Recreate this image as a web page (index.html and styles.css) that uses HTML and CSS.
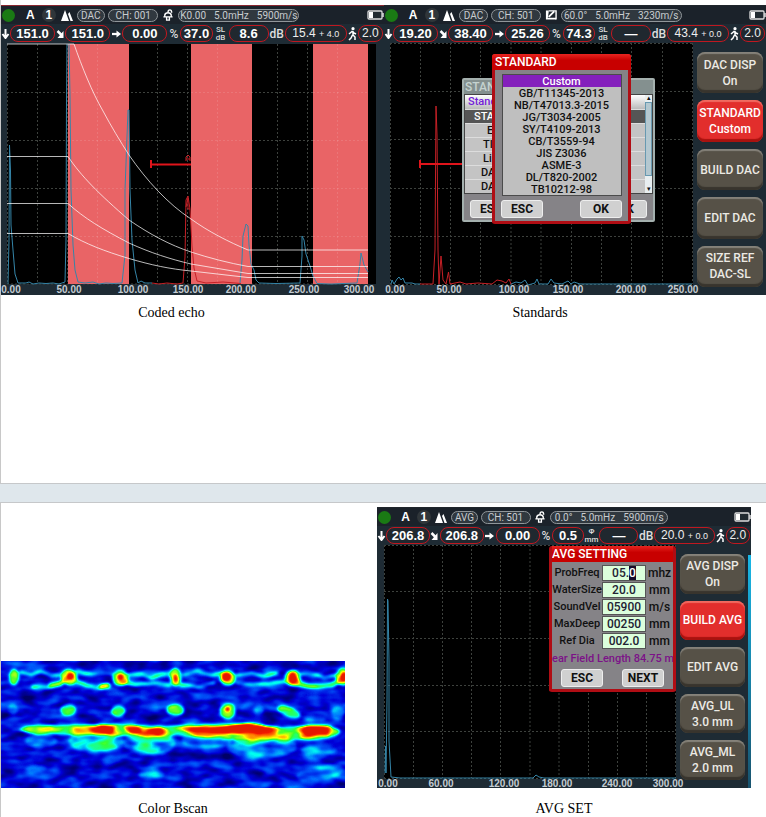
FILE: index.html
```html
<!DOCTYPE html>
<html lang="en">
<head>
<meta charset="utf-8">
<title>Flaw detector functions</title>
<link rel="stylesheet" href="styles.css">
</head>
<body>
<svg class="defs" aria-hidden="true">
  <symbol id="peaks" viewBox="0 0 12 12"><path d="M0 12 4 1 8 12ZM7 5 8.500 3 12 12H9.500Z" fill="#fff"/></symbol>
  <symbol id="probe" viewBox="0 0 12 13"><path d="M1 8.500H11M2.500 8V6.500Q3 4 6 4T9.500 6.500V8M4.500 9V12H7.500V9M6 3.500Q6 1 8 1T10 4" fill="none" stroke="#fff" stroke-width="1.500"/></symbol>
  <symbol id="angle" viewBox="0 0 13 12"><path d="M1 1H4V3L3 9H12V11H1Z" fill="#fff"/><path d="M4 1.500H12V11" fill="none" stroke="#fff" stroke-width="1.500"/><path d="M4 8 10 2" stroke="#fff" stroke-width="2"/></symbol>
  <symbol id="battery" viewBox="0 0 17 10"><rect x="1" y="1" width="14" height="8" rx="1" fill="#222b31" stroke="#ddd" stroke-width="1.300"/><path d="M2 2H6V8H2Z" fill="#fff"/><path d="M16 3V7" stroke="#ddd" stroke-width="1.500"/></symbol>
  <symbol id="down" viewBox="0 0 8 10"><path d="M4 0V8M1 5 4 9 7 5" fill="none" stroke="#fff" stroke-width="2"/></symbol>
  <symbol id="diag" viewBox="0 0 8 10"><path d="M1 2 5 6" stroke="#fff" stroke-width="2.500"/><path d="M7 2V9H1Z" fill="#fff"/></symbol>
  <symbol id="right" viewBox="0 0 10 10"><path d="M0 5H6" stroke="#fff" stroke-width="2.500"/><path d="M5 1 10 5 5 9Z" fill="#fff"/></symbol>
  <symbol id="walk" viewBox="0 0 9 14"><circle cx="5" cy="1.700" r="1.600" fill="#fff"/><path d="M5 4V8L7 10V13M4.500 8 3 11 1 13M1 7 4 4.500 6 6 8 7" fill="none" stroke="#fff" stroke-width="1.500"/></symbol>
</svg>

<main>
<section class="page page-first">
  <figure class="shot coded">
    <div class="device">
      <div class="status">
        <i class="lamp"></i><b>A</b><b class="num">1</b><svg><use href="#peaks"/></svg>
        <span class="tag">DAC</span><span class="tag ch">CH: 001</span><svg><use href="#probe"/></svg>
        <span class="tag wide"><span>K0.00</span><span>5.0mHz</span><span>5900m/s</span></span><svg class="bat"><use href="#battery"/></svg>
      </div>
      <div class="readout">
        <svg><use href="#down"/></svg><b class="val">151.0</b><svg><use href="#diag"/></svg><b class="val">151.0</b>
        <svg><use href="#right"/></svg><b class="val">0.00</b><span class="unit">%</span><b class="val">37.0</b>
        <span class="stack"><span>SL</span><span>dB</span></span><b class="val">8.6</b><span class="unit">dB</span>
        <span class="val gain">15.4 <small>+ 4.0</small></span><svg class="man"><use href="#walk"/></svg><span class="val gain">2.0</span>
      </div>
      <svg class="chart" viewBox="0 43 383 252" role="img" aria-label="Coded echo A-scan">
        <path class="plot" d="M6 44H375V284H6Z"/>
        <path class="grid" d="M6.500 44V284M36.500 44V284M66.500 44V284M96.500 44V284M126.500 44V284M156.500 44V284M186.500 44V284M216.500 44V284M246.500 44V284M276.500 44V284M306.500 44V284M336.500 44V284M6 92.500H367M6 140.500H367M6 188.500H367M6 236.500H367M6 284H367"/>
        <path fill="#e96466" d="M67 44H128V284H67ZM190 44H251V284H190ZM312 44H367V284H312Z"/>
        <path class="grid faint" d="M96.500 44V284M216.500 44V284M336.500 44V284M67 92.500H128M67 140.500H128M67 188.500H128M67 236.500H128M190 92.500H251M190 140.500H251M190 188.500H251M190 236.500H251M312 92.500H367M312 140.500H367M312 188.500H367M312 236.500H367"/>
        <path class="echo" d="M7 284 8 240 8.500 145 9.500 171 10 225 12 250 14 274 17 283 25 283 28 282 32 284 38 283 45 283.500 52 283 58 284 64 282 65 240 65.500 100 66 44M68 44 69 95 70 190 72 245 74 270 77 282 84 283 92 282 98 284 105 283 112 283.500 121 283 124 255 124 190 127 110 128 110 129 190 131 240 134 270 137 283 140 281 144 283 151 283M239 283 241 260 242 236 245 224 247 226 248 245 250 264 253 270 255 280 258 283 275 283.500 299 283 301 256 301 236 303 240 305 254 309 266 312 276 316 283.500 330 284 356 283 359 264 360 253 363 265 367 272"/>
        <path class="hit" d="M151 283 158 284 166 283 176 284 182 283 184 257 185 200 187 196 189 209 187 209 187 198 185 207M189 209 191 246 193 268 196 281 205 283 222 282 240 283.500"/>
        <path class="gate" d="M150 160V168M150 164.500H190"/><path class="hit" d="M185 161V157L187 155 189 157V161M185 159H189"/>
        <path class="curve" d="M6 44H73C81 67 91 92 102 111 110 126 119 141 128 155 146 181 167 204 190 219 208 232 228 242 247 250H367M6 156.500H67C80 176 98 194 128 220 150 235 169 245 190 252 208 258 228 263 247 266.500H367M6 203.500H67C83 218 101 229 128 243 150 253 169 259 190 264L247 273.500H367M6 233.500H67C85 244 103 251 128 258.500 150 265 169 269 190 271L247 277.500H367"/>
        <g class="axis"><text x="10" y="293">0.00</text><text x="68" y="293">50.00</text><text x="132" y="293">100.00</text><text x="187" y="293">150.00</text><text x="240" y="293">200.00</text><text x="303" y="293">250.00</text><text x="358" y="293">300.00</text></g>
      </svg>
    </div>
    <figcaption>Coded echo</figcaption>
  </figure>

  <figure class="shot standards">
    <div class="device">
      <div class="status">
        <i class="lamp"></i><b>A</b><b class="num">1</b><svg><use href="#peaks"/></svg>
        <span class="tag">DAC</span><span class="tag ch">CH: 501</span><svg><use href="#angle"/></svg>
        <span class="tag wide"><span>60.0°</span><span>5.0mHz</span><span>3230m/s</span></span><svg class="bat"><use href="#battery"/></svg>
      </div>
      <div class="readout">
        <svg><use href="#down"/></svg><b class="val">19.20</b><svg><use href="#diag"/></svg><b class="val">38.40</b>
        <svg><use href="#right"/></svg><b class="val">25.26</b><span class="unit">%</span><b class="val">74.3</b>
        <span class="stack"><span>SL</span><span>dB</span></span><b class="val">—</b><span class="unit">dB</span>
        <span class="val gain">43.4 <small>+ 0.0</small></span><svg class="man"><use href="#walk"/></svg><span class="val gain">2.0</span>
      </div>
      <div class="work">
        <div class="scope">
          <svg class="chart" viewBox="384 43 311 252" role="img" aria-label="A-scan">
            <path class="plot" d="M390 43H693V285H390Z"/>
            <path class="grid" d="M390.500 43V284M420.500 43V284M450.500 43V284M480.500 43V284M511 43V284M541 43V284M571.500 43V284M601.500 43V284M631.500 43V284M662.500 43V284M692.500 43V284M390 43.500H692M390 91.500H692M390 139.500H692M390 188.500H692M390 236.500H692M390 284.500H692"/>
            <path class="echo" d="M391 284 392 280 394 284 397 279 399 277 401 280 403 278 405 283 412 283 415 284 420 284M511 284 516 282 521 283 525 280 528 285 535 283 537 279 539 284 548 284 551 279 554 283 562 284 568 281 571 284 574 282 580 284 692 284"/>
            <path class="hit" d="M420 284 433 284 435 250 436 106 437 135 438 250 439 284 441 256 443 280 446 284 448.500 272 450 284 460 282 466 284 478 283 492 284 497 280 502 281 506 283 509 279 511 284"/>
            <path class="gate" d="M420 160V168M420 164H463"/>
            <g class="axis"><text x="395" y="293">0.00</text><text x="449" y="293">50.00</text><text x="514" y="293">100.00</text><text x="568" y="293">150.00</text><text x="631" y="293">200.00</text><text x="683" y="293">250.00</text></g>
          </svg>
          <div class="dialog under">
            <h2>STAN</h2>
            <div class="table-wrap">
              <table>
                <thead><tr><th>Stand</th></tr></thead>
                <tbody><tr class="picked"><td>STA</td></tr><tr><td class="in2">E</td></tr><tr><td class="in1">TI</td></tr><tr><td class="in1">Li</td></tr><tr><td>DA</td></tr><tr><td>DA</td></tr></tbody>
              </table>
              <div class="scroll"><i>▴</i><span></span><i>▾</i></div>
            </div>
            <div class="actions"><button type="button">ESC</button><button type="button">OK</button></div>
          </div>
          <div class="dialog red over">
            <h2 id="std">STANDARD</h2>
            <select size="10" aria-labelledby="std">
              <option selected>Custom</option><option>GB/T11345-2013</option><option>NB/T47013.3-2015</option><option>JG/T3034-2005</option><option>SY/T4109-2013</option><option>CB/T3559-94</option><option>JIS Z3036</option><option>ASME-3</option><option>DL/T820-2002</option><option>TB10212-98</option>
            </select>
            <div class="actions"><button type="button">ESC</button><button type="button">OK</button></div>
          </div>
        </div>
        <nav class="menu">
          <button type="button">DAC DISP<br>On</button><button type="button" class="on">STANDARD<br>Custom</button><button type="button">BUILD DAC</button><button type="button">EDIT DAC</button><button type="button">SIZE REF<br>DAC-SL</button>
        </nav>
      </div>
    </div>
    <figcaption>Standards</figcaption>
  </figure>
</section>

<section class="page page-second">
  <figure class="shot bscan">
    <svg class="map" viewBox="0 0 343 127" preserveAspectRatio="none" role="img" aria-label="Color B-scan">
      <defs>
        <filter id="jet" x="0" y="0" width="343" height="127" filterUnits="userSpaceOnUse" color-interpolation-filters="sRGB">
          <feGaussianBlur in="SourceGraphic" stdDeviation="1.800" result="s"/>
          <feTurbulence type="fractalNoise" baseFrequency="0.050 0.100" numOctaves="2" seed="8"/>
          <feColorMatrix values="1 0 0 0 0 1 0 0 0 0 1 0 0 0 0 0 0 0 0 1" result="n"/>
          <feComposite in="s" in2="n" operator="arithmetic" k1="0" k2="0.930" k3="0.420" k4="-0.100"/>
          <feColorMatrix values="1 0 0 0 0 0 1 0 0 0 0 0 1 0 0 0 0 0 0 1"/>
          <feComponentTransfer>
            <feFuncR type="table" tableValues="0 0 0 0 .2 1 1 .95 .9"/>
            <feFuncG type="table" tableValues="0 0 .4 1 1 1 .45 .1 .1"/>
            <feFuncB type="table" tableValues=".4 .85 1 .95 .2 0 0 0 0"/>
          </feComponentTransfer>
        </filter>
      </defs>
      <g filter="url(#jet)">
        <path d="M-10-10H353V137H-10Z" fill="#060606"/>
        <g fill="none" stroke="#fff" stroke-linecap="round" stroke-opacity=".28" stroke-width="4">
          <path d="M20 11 30 14 40 10 50 15 62 13M76 10 90 14 100 12 112 13M128 14 140 13 150 17 160 13 170 12M182 14 196 10 210 14 220 12M236 14 250 12 262 16 275 12M300 13 315 14 322 17 334 14"/>
          <path d="M32 26 46 27 58 23 66 18M76 20 86 25 98 27 106 23M120 20 134 24 152 22 168 24M180 24 196 26 212 22M236 22 250 24 268 23 284 20"/>
        </g>
        <g fill="none" stroke="#fff" stroke-linecap="round" stroke-opacity=".42" stroke-width="5"><path d="M50 24 60 22M100 26 107 25M296 22 306 25 318 26 330 24 338 20"/></g>
        <g fill="#fff" fill-opacity=".48">
          <ellipse cx="13" cy="16" rx="5" ry="8"/><ellipse cx="68" cy="16" rx="8" ry="8"/><ellipse cx="119" cy="17" rx="8" ry="8"/><ellipse cx="174" cy="16" rx="6" ry="9"/><ellipse cx="226" cy="17" rx="8" ry="8"/><ellipse cx="291" cy="17" rx="8" ry="8"/><ellipse cx="341" cy="16" rx="7" ry="9"/>
        </g>
        <g fill="#fff" fill-opacity=".4">
          <ellipse cx="67" cy="49" rx="8" ry="6"/><ellipse cx="117" cy="50" rx="7" ry="6"/><ellipse cx="174" cy="49" rx="9" ry="6"/><ellipse cx="226" cy="50" rx="8" ry="8"/><ellipse cx="287" cy="51" rx="12" ry="5" transform="rotate(20 287 51)"/>
        </g>
        <g fill="#fff" fill-opacity=".16">
          <ellipse cx="12" cy="48" rx="5" ry="6"/><ellipse cx="257" cy="49" rx="5" ry="6"/><ellipse cx="336" cy="52" rx="7" ry="7"/><ellipse cx="313" cy="58" rx="11" ry="3"/>
          <ellipse cx="40" cy="80" rx="16" ry="7"/><ellipse cx="95" cy="80" rx="28" ry="12"/><ellipse cx="148" cy="82" rx="26" ry="12"/><ellipse cx="205" cy="79" rx="25" ry="9"/><ellipse cx="260" cy="85" rx="35" ry="13"/><ellipse cx="317" cy="89" rx="18" ry="5"/><ellipse cx="318" cy="112" rx="24" ry="8" transform="rotate(-10 318 112)"/><ellipse cx="150" cy="114" rx="13" ry="4"/><ellipse cx="35" cy="108" rx="11" ry="3"/>
          <ellipse cx="100" cy="86" rx="16" ry="5"/><ellipse cx="145" cy="87" rx="14" ry="5"/><ellipse cx="95" cy="77" rx="20" ry="5"/><ellipse cx="148" cy="78" rx="20" ry="5"/><ellipse cx="260" cy="79" rx="28" ry="5"/>
        </g>
        <path d="M17 69Q28 62 60 64L105 63 170 65 240 62 280 66 315 64Q338 66 338 71 334 79 310 79L250 79 205 76 175 75 130 75 90 74 35 74Z" fill="#fff" fill-opacity=".42"/>
        <path d="M34 68Q44 64 54 68L46 71ZM70 68Q96 61 115 66L111 73 82 72ZM122 66Q135 61 145 67L161 66 168 69 160 75 140 73 124 71ZM179 68 205 64 225 66 250 61 278 67 274 74 220 73 205 77 190 73ZM295 70Q300 62 329 65L331 71 326 76 300 77Z" fill="#fff" fill-opacity=".4"/>
        <path d="M87 68 100 65 112 67 109 72 93 72ZM123 66 136 66 141 70 130 72ZM144 69 158 67 163 70 156 73ZM183 68 220 66 247 63 262 66 275 69 255 72 205 72ZM299 70 305 67 327 68 326 73 305 75Z" fill="#fff"/>
        <g fill="#fff"><circle cx="69" cy="15" r="3"/><circle cx="119" cy="16" r="3"/><ellipse cx="174" cy="17" rx="2" ry="4"/><ellipse cx="225" cy="16" rx="4" ry="4"/><ellipse cx="291" cy="17" rx="4" ry="5"/><ellipse cx="342" cy="16" rx="3" ry="5"/><circle cx="226" cy="48" r="2"/></g>
      </g>
    </svg>
    <figcaption>Color Bscan</figcaption>
  </figure>

  <figure class="shot avg">
    <div class="device">
      <div class="status">
        <i class="lamp"></i><b>A</b><b class="num">1</b><svg><use href="#peaks"/></svg>
        <span class="tag">AVG</span><span class="tag ch">CH: 501</span><svg><use href="#probe"/></svg>
        <span class="tag wide"><span>0.0°</span><span>5.0mHz</span><span>5900m/s</span></span><svg class="bat"><use href="#battery"/></svg>
      </div>
      <div class="readout">
        <svg><use href="#down"/></svg><b class="val">206.8</b><svg><use href="#diag"/></svg><b class="val">206.8</b>
        <svg><use href="#right"/></svg><b class="val">0.00</b><span class="unit">%</span><b class="val">0.5</b>
        <span class="stack"><span>Φ</span><span>mm</span></span><b class="val">—</b><span class="unit">dB</span>
        <span class="val gain">20.0 <small>+ 0.0</small></span><svg class="man"><use href="#walk"/></svg><span class="val gain">2.0</span>
      </div>
      <div class="work">
        <div class="scope">
          <svg class="chart" viewBox="377 544 302 243" role="img" aria-label="A-scan">
            <path class="plot" d="M384 544H676V778H384Z"/>
            <path class="grid" d="M384.500 544V777M413.500 544V777M442.500 544V777M471.500 544V777M500.500 544V777M530 544V777M559 544V777M588.500 544V777M617.500 544V777M646.500 544V777M675.500 544V777M384 544.500H676M384 590.500H676M384 637.500H676M384 684.500H676M384 730.500H676M384 777.500H676"/>
            <path class="echo" d="M385 772 385.500 745 386 772 387 700 387.500 598 388 600 389 660 389 740 391 776 400 777 470 777 533 777 536 774 539 776 544 777 676 777"/>
            <g class="axis"><text x="388" y="786">0.00</text><text x="441" y="786">60.00</text><text x="504" y="786">120.00</text><text x="557" y="786">180.00</text><text x="617" y="786">240.00</text><text x="668" y="786">300.00</text></g>
          </svg>
          <form class="dialog red setting">
            <h2>AVG SETTING</h2>
            <div class="fields">
              <label for="freq">ProbFreq</label><input id="freq" value="05.0"><span>mhz</span>
              <label for="size">WaterSize</label><input id="size" value="20.0"><span>mm</span>
              <label for="vel">SoundVel</label><input id="vel" value="05900"><span>m/s</span>
              <label for="deep">MaxDeep</label><input id="deep" value="00250"><span>mm</span>
              <label for="dia">Ref Dia</label><input id="dia" value="002.0"><span>mm</span>
            </div>
            <p class="near"><span>ear Field Length 84.75 m</span></p>
            <div class="actions"><button type="button">ESC</button><button type="button">NEXT</button></div>
          </form>
        </div>
        <nav class="menu">
          <button type="button">AVG DISP<br>On</button><button type="button" class="on">BUILD AVG</button><button type="button">EDIT AVG</button><button type="button">AVG_UL<br>3.0 mm</button><button type="button">AVG_ML<br>2.0 mm</button>
        </nav>
      </div>
    </div>
    <figcaption>AVG SET</figcaption>
  </figure>
</section>
</main>
<script src="script.js"></script>
</body>
</html>
```
FILE: styles.css
```css
* { box-sizing: border-box; }
body { margin: 0; background: #dfe7ec; font-family: "Liberation Serif", serif; color: #000; overflow-x: hidden; }
.defs { position: absolute; width: 0; height: 0; }
.page { display: grid; background: #fff; border-left: 1px solid #c8c8c8; }
.page-first { grid-template-columns: minmax(0, 383fr) minmax(0, 382fr); padding: 5px 0 160px; border-bottom: 1px solid #c6c8ca; margin-bottom: 18px; }
.page-second { grid-template-columns: minmax(0, 344fr) minmax(0, 374fr); column-gap: 32px; padding: 4px 15px 0 0; border-top: 1px solid #c6c8ca; align-items: end; }
.shot { margin: 0; }
figcaption { font-size: 14px; line-height: 20px; text-align: center; margin-top: 8px; }
.page-second figcaption { margin-top: 11px; }
.coded figcaption { padding-right: 42px; }
.standards figcaption { padding-right: 70px; }
.map { display: block; width: 100%; height: 127px; margin-bottom: 1px; }

.device { font-family: Roboto, "Liberation Sans", sans-serif; background: #1e2b34; color: #fff; border-top: 1px solid #20262c; }
.coded .device { border-top-color: #8a2730; }
.status, .readout { display: grid; align-items: center; justify-items: center; }
.status { height: 18px; grid-template-columns: 18fr 22fr 15fr 20fr 28fr 53fr 20fr 120fr 84fr; background: #1b222a; font-size: 12px; }
.status > * { min-width: 0; }
.status > b { font-family: "Liberation Sans", sans-serif; }
.status > svg { width: 12px; height: 12px; }
.status > svg.bat { width: 17px; height: 10px; justify-self: end; }
.lamp { width: 13px; height: 13px; border-radius: 50%; background: #1a7a14; justify-self: start; margin-left: 1px; }
.num { background: #30363a; border-radius: 50%; width: 14px; text-align: center; line-height: 14px; }
.tag { display: flex; justify-content: center; align-items: center; width: 100%; height: 13px; border: 1px solid #90969a; border-radius: 7px; background: #30383f; color: #c8cccf; font: 10px/11px Roboto, "Liberation Sans", sans-serif; white-space: nowrap; }
.tag.ch { width: 50px; justify-self: end; }
.tag.wide { gap: 8px; }
.readout { height: 19px; grid-template-columns: 9fr 45fr 10fr 45fr 12fr 45fr 13fr 32fr 16fr 40fr 16fr 62fr 11fr 25fr 1fr; font-family: "Liberation Sans", sans-serif; font-size: 13px; }
.readout > * { min-width: 0; }
.readout > svg { width: 9px; height: 10px; }
.readout > svg.man { height: 14px; }
.val { width: 100%; height: 17px; border: 1px solid #c01820; border-radius: 8px; background: #20282f; line-height: 15px; text-align: center; white-space: nowrap; }
.val.gain { font-size: 12px; color: #eee; }
.gain small { font-size: 9px; }
.unit { font: 500 12px/14px Roboto, "Liberation Sans", sans-serif; color: #ddd; }
.stack { display: grid; font: 500 8px/8px Roboto, "Liberation Sans", sans-serif; text-align: center; color: #ddd; }

.chart { display: block; width: 100%; height: auto; overflow: visible; }
.plot { fill: #000; }
.grid { fill: none; stroke: #3d413d; stroke-dasharray: 2 2; }
.grid.faint { stroke: #fff; stroke-opacity: .12; }
.echo { fill: none; stroke: #3585a8; }
.hit { fill: none; stroke: #c62026; }
.gate { fill: none; stroke: #e0141b; stroke-width: 2; }
.curve { fill: none; stroke: #fff; stroke-opacity: .72; }
.axis { font: bold 10px "Liberation Sans", sans-serif; fill: #c4ccd2; text-anchor: middle; }

.work { display: grid; grid-template-columns: minmax(0, 311fr) minmax(0, 71fr); }
.avg .work { grid-template-columns: minmax(0, 302fr) minmax(0, 72fr); }
.scope { position: relative; }
button { font-family: inherit; font-weight: 500; padding: 0; }
.menu { display: flex; flex-direction: column; gap: 7px; padding: 9px 3px 8px 2px; }
.avg .menu { padding: 9px 6px 8px 1px; background: linear-gradient(#18b8e8, #184e68) right 10px / 3px 100% no-repeat; }
.menu button { flex: 1; border: 0; border-radius: 8px; background: #565147; color: #eceae4; font-size: 12px; line-height: 16px; box-shadow: inset 0 2px 1px #85827a, inset 0 -3px 1px #38342d; white-space: nowrap; }
.menu .on { background: #e22e2c; color: #fff; box-shadow: inset 0 2px 1px #f06a60, inset 0 -3px 1px #a8120f; }

.dialog { position: absolute; background: #858387; color: #111; font-weight: 500; font-size: 12px; }
.dialog h2 { margin: 0; font-size: 12px; line-height: 14px; font-weight: 500; }
.red { border: 3px solid #b00d14; border-top-width: 0; border-radius: 3px; }
.red h2 { margin: 0 -3px; padding-left: 3px; height: 16px; line-height: 16px; color: #fff; background: linear-gradient(#e82520, #c80000 40%, #c80000); border-radius: 3px 3px 0 0; }
.actions { display: flex; justify-content: space-between; }
.actions button { width: 42px; height: 18px; border: 1px solid #eee; border-radius: 3px; background: #d0d0d0; color: #111; font-size: 12px; font-weight: bold; line-height: 14px; }
.under { left: 78px; top: 35px; width: 193px; height: 144px; border: 2px solid #a4b0ae; border-radius: 2px; }
.under h2 { color: #c5d2cf; background: #84908f; padding-left: 1px; }
.under .actions { padding: 6px 6px 0; }
.table-wrap { display: flex; background: #c4c4c4; border: 1px solid #444; height: 100px; overflow: hidden; }
table { flex: 1; border-collapse: collapse; font-size: 11px; }
th, td { width: 100%; text-align: left; padding: 0 0 0 3px; height: 14px; line-height: 13px; font-weight: 500; border-bottom: 1px solid #ddd; }
td { padding-left: 16px; }
td.in1 { padding-left: 18px; }
td.in2 { padding-left: 22px; }
th { color: #7420d8; background: linear-gradient(#fff, #bbb); }
.picked { background: #555; color: #fff; }
.picked td { padding-left: 9px; }
.scroll { display: flex; flex-direction: column; flex: 0 0 7px; background: #e8eef0; font-size: 7px; line-height: 7px; text-align: center; }
.scroll i { font-style: normal; }
.scroll span { flex: 0 0 74px; background: #b4c8d0; border: 1px solid #6899b0; margin-bottom: auto; }
.over { left: 108px; top: 11px; width: 139px; height: 170px; }
.over select { display: block; width: 120px; height: 122px; margin: 4px auto; border: 1px solid #4b4b4b; border-radius: 0; padding: 0; background: #bfbfbf; color: #111; font: 500 11px/12px Roboto, "Liberation Sans", sans-serif; overflow: hidden; outline: 0; scrollbar-width: none; }
.over option { min-height: 12px; height: 12px; padding: 0; text-align: center; line-height: 12px; font: inherit; }
.over option:checked { color: #fff; background: linear-gradient(#8420bc, #8420bc); }
.over .actions { padding: 0 6px; }
.setting { left: 172px; top: 1px; width: 127px; height: 146px; overflow: hidden; }
.setting h2 { font-size: 12px; }
.fields { display: grid; grid-template-columns: 50px 44px 1fr; row-gap: 1px; padding-top: 3px; align-items: center; text-align: center; font-size: 11px; line-height: 16px; white-space: nowrap; }
.fields span { font-size: 12px; }
.fields input { width: 44px; height: 16px; border: 1px solid #555; border-radius: 0; padding: 0; background: #dcffdc; color: #223; font: 500 12px Roboto, "Liberation Sans", sans-serif; text-align: center; outline: 0; }
.fields input::selection { background: #180c28; color: #fff; }
.near { margin: 1px 0 2px; line-height: 17px; font-size: 11px; text-align: center; color: #7c1288; white-space: nowrap; }
.setting .actions { padding: 0 9px; }
```
FILE: script.js
```js
// Highlight the digit being edited in the probe frequency.
const freq = document.getElementById("freq");
freq.focus({ preventScroll: true });
freq.setSelectionRange(3, 4);
```
